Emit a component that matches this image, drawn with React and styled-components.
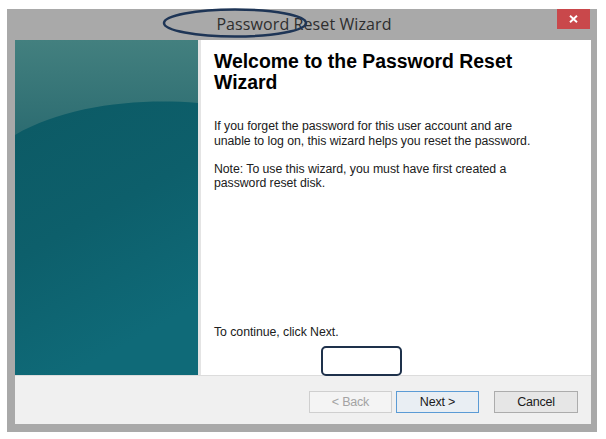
import React from "react";
import styled, { createGlobalStyle } from "styled-components";

const Global = createGlobalStyle`
  html, body { margin: 0; padding: 0; background: #ffffff; }
  body { font-family: "Liberation Sans", Arial, sans-serif; }
`;

const Page = styled.div`
  position: relative;
  width: 606px;
  height: 439px;
  padding: 9px 0 0 7px;
  box-sizing: border-box;
`;

const Window = styled.div`
  width: 590px;
  height: 423px;
  background: #a9a9a9;
  display: flex;
  flex-direction: column;
  box-sizing: border-box;
  padding: 0 6px 8px 8px;
`;

const TitleBar = styled.div`
  position: relative;
  height: 31px;
  display: flex;
  align-items: center;
  justify-content: center;
  flex-shrink: 0;
`;

const Title = styled.div`
  font-family: "Open Sans", "Noto Sans", sans-serif;
  font-size: 16px;
  letter-spacing: 0.1px;
  color: #2e2e2e;
  margin-left: 2px;
  margin-top: -2px;
`;

const CloseButton = styled.div`
  position: absolute;
  top: 0;
  right: 1px;
  width: 33px;
  height: 20px;
  background: #c9484b;
  display: flex;
  align-items: center;
  justify-content: center;
`;

const Body = styled.div`
  flex: 1;
  display: flex;
  flex-direction: column;
  background: #f0f0f0;
`;

const Main = styled.div`
  height: 335px;
  display: flex;
  background: #ffffff;
  border-bottom: 1px solid #dcdcdc;
  flex-shrink: 0;
`;

const SidePanel = styled.div`
  width: 183px;
  flex-shrink: 0;
  position: relative;
  background: linear-gradient(180deg, #0c5a66 0%, #0d6270 60%, #0f6b7a 100%);
  overflow: hidden;
  border-right: 3px solid #e4e4e4;
`;

const PanelArt = styled.svg`
  display: block;
  width: 183px;
  height: 335px;
`;

const Content = styled.div`
  flex: 1;
  display: flex;
  flex-direction: column;
  padding: 11px 4px 0 13px;
  color: #1a1a1a;
`;

const Heading = styled.h1`
  margin: 0;
  font-family: "Liberation Sans", Arial, sans-serif;
  font-weight: bold;
  font-size: 19.4px;
  line-height: 21px;
  color: #000;
`;

const Para = styled.p`
  margin: ${(p) => p.$top}px 0 0 0;
  font-family: "Liberation Sans", Arial, sans-serif;
  font-size: 12.3px;
  line-height: 14.5px;
  letter-spacing: -0.05px;
  color: #202020;
  white-space: nowrap;
`;

const Spacer = styled.div`
  flex: 1;
`;

const Footer = styled.div`
  flex: 1;
  display: flex;
  justify-content: flex-end;
  align-items: flex-start;
  padding: 15px 13px 0 0;
`;

const Button = styled.div`
  width: ${(p) => p.$w}px;
  height: 22px;
  box-sizing: border-box;
  margin-left: ${(p) => p.$gap}px;
  display: flex;
  align-items: center;
  justify-content: center;
  font-family: "Liberation Sans", Arial, sans-serif;
  font-size: 12.5px;
  letter-spacing: -0.2px;
  color: ${(p) => (p.$disabled ? "#a3a3a3" : "#1a1a1a")};
  background: ${(p) => (p.$disabled ? "#f4f4f4" : p.$default ? "#e9eef3" : "#e6e6e6")};
  border: 1px solid
    ${(p) => (p.$disabled ? "#cfcfcf" : p.$default ? "#5b9bd5" : "#acacac")};
`;

const Ellipse = styled.svg`
  position: absolute;
  left: 162px;
  top: 8px;
  width: 146px;
  height: 30px;
  overflow: visible;
`;

const Highlight = styled.div`
  position: absolute;
  left: 321px;
  top: 346px;
  width: 81px;
  height: 30px;
  box-sizing: border-box;
  border: 2.5px solid #1e314b;
  border-radius: 5px;
`;

export default function App() {
  return (
    <>
      <Global />
      <Page>
        <Window>
          <TitleBar>
            <Title>Password Reset Wizard</Title>
            <CloseButton>
              <svg width="9" height="8" viewBox="0 0 9 8">
                <path d="M1 0.8 L8 7.2 M8 0.8 L1 7.2" stroke="#fff" strokeWidth="1.9" />
              </svg>
            </CloseButton>
          </TitleBar>
          <Body>
            <Main>
              <SidePanel>
                <PanelArt viewBox="0 0 183 335">
                  <defs>
                    <linearGradient id="topg" x1="0" y1="0" x2="0" y2="1">
                      <stop offset="0" stopColor="#43807f" />
                      <stop offset="1" stopColor="#2c6c71" />
                    </linearGradient>
                    <linearGradient id="botg" x1="0" y1="0" x2="0.3" y2="1">
                      <stop offset="0" stopColor="#0c5862" />
                      <stop offset="0.6" stopColor="#0d5f6b" />
                      <stop offset="1" stopColor="#0f6a78" />
                    </linearGradient>
                  </defs>
                  <rect x="0" y="0" width="183" height="335" fill="url(#botg)" />
                  <path d="M0 0 H183 V63 C120 58 50 66 0 95 Z" fill="url(#topg)" />
                </PanelArt>
              </SidePanel>
              <Content>
                <Heading>
                  Welcome to the Password Reset
                  <br />
                  Wizard
                </Heading>
                <Para $top={26}>
                  If you forget the password for this user account and are
                  <br />
                  unable to log on, this wizard helps you reset the password.
                </Para>
                <Para $top={13.5}>
                  Note: To use this wizard, you must have first created a
                  <br />
                  password reset disk.
                </Para>
                <Spacer />
                <Para $top={0} style={{ marginBottom: 36 }}>
                  To continue, click Next.
                </Para>
              </Content>
            </Main>
            <Footer>
              <Button $w={83} $gap={0} $disabled>
                &lt; Back
              </Button>
              <Button $w={83} $gap={4} $default>
                Next &gt;
              </Button>
              <Button $w={84} $gap={15}>
                Cancel
              </Button>
            </Footer>
          </Body>
        </Window>
        <Ellipse viewBox="0 0 146 30">
          <ellipse cx="73" cy="15" rx="71" ry="13.5" fill="none" stroke="#1e3556" strokeWidth="2.5" />
        </Ellipse>
        <Highlight />
      </Page>
    </>
  );
}
